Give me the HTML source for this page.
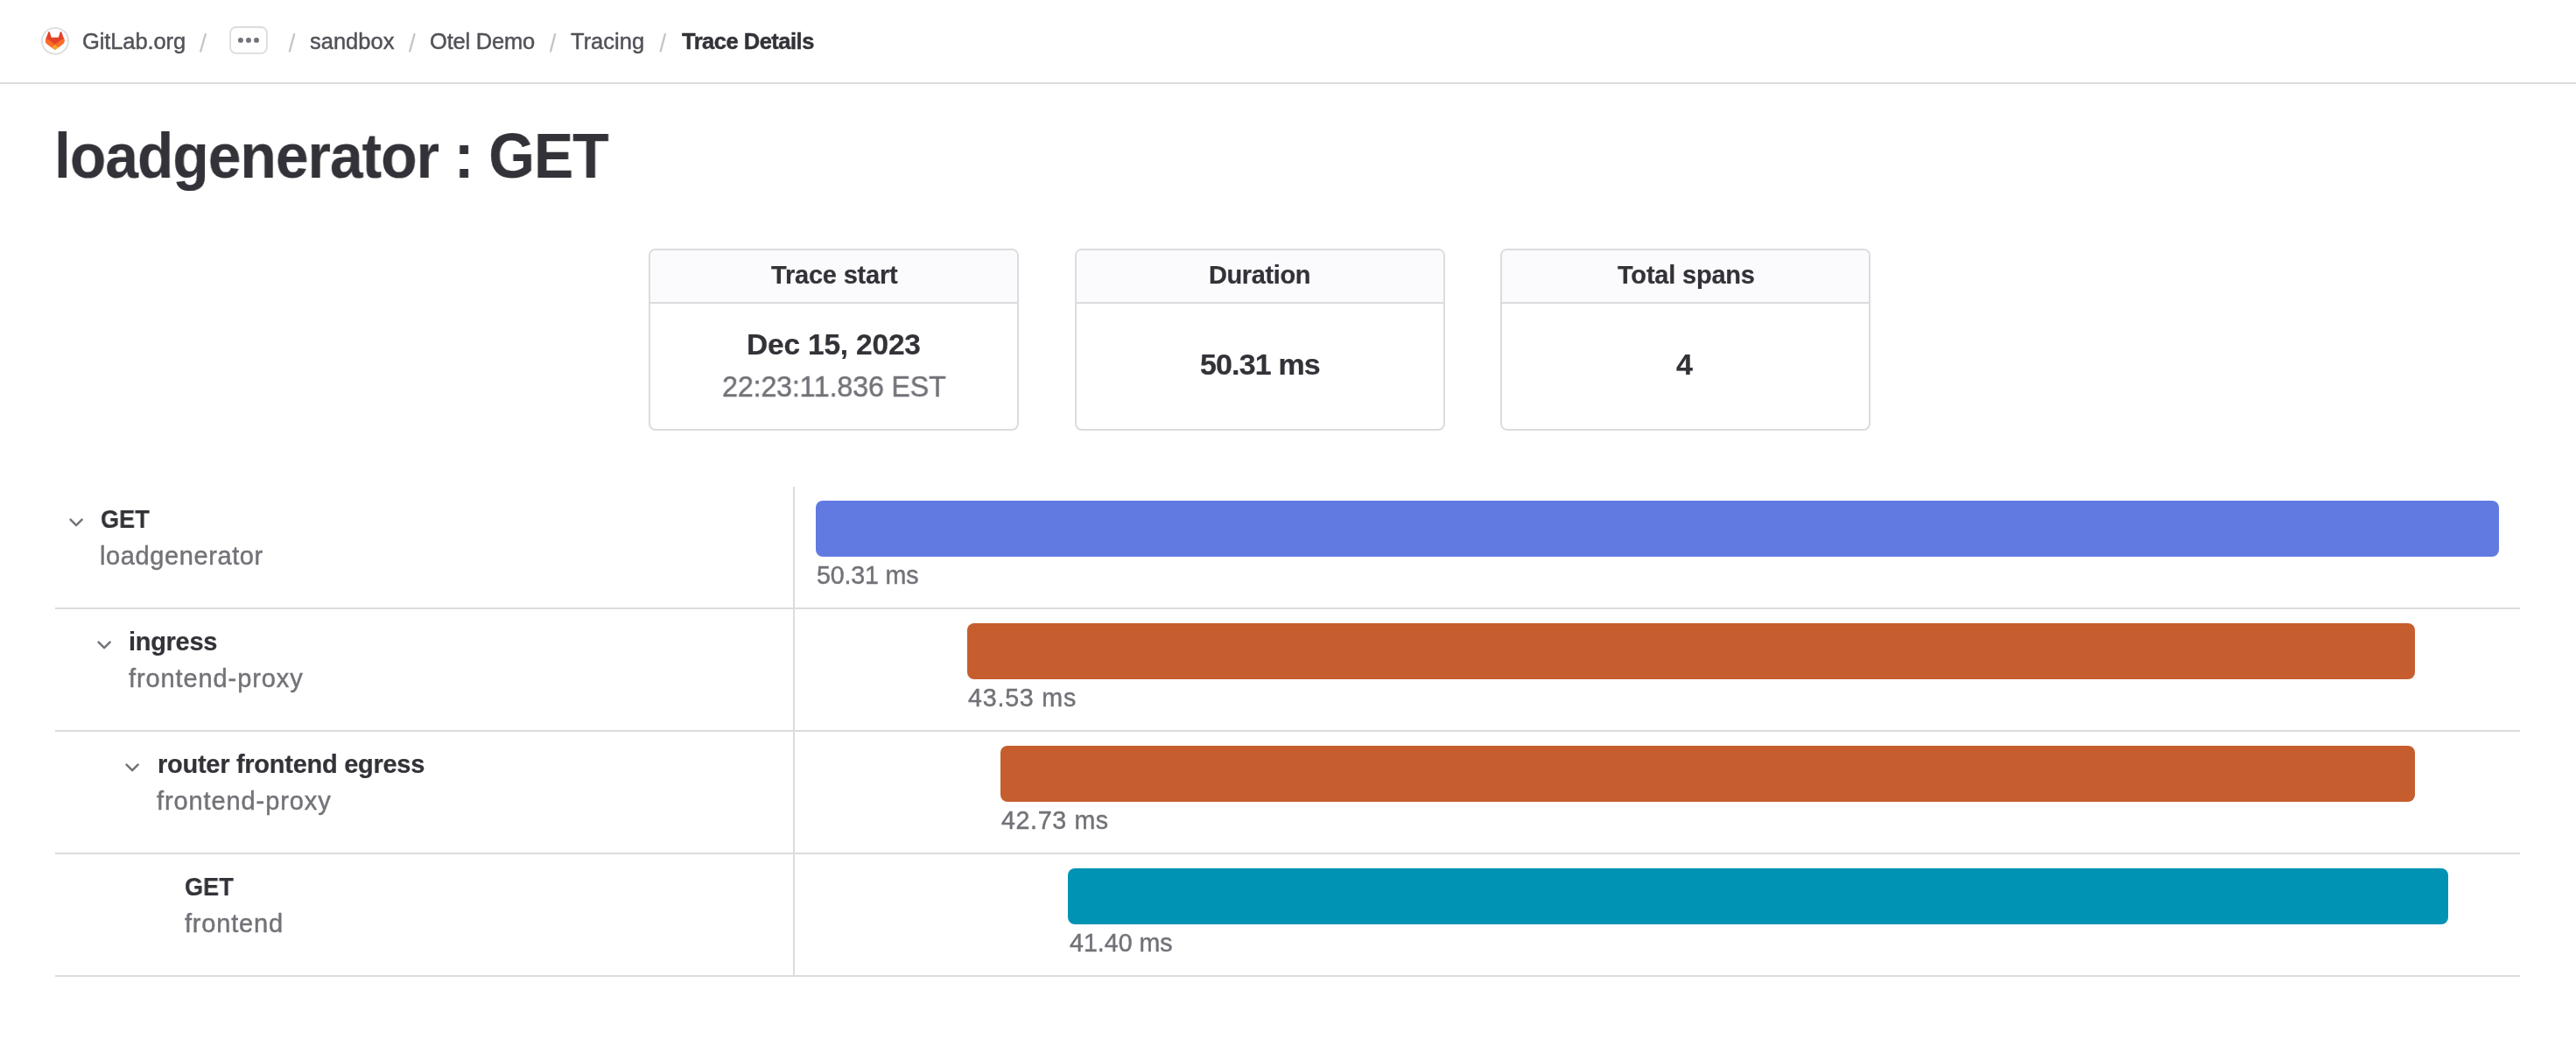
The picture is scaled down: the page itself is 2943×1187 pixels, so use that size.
<!DOCTYPE html>
<html>
<head>
<meta charset="utf-8">
<style>
html,body{margin:0;padding:0;background:#fff;}
body{width:2943px;height:1187px;position:relative;overflow:hidden;font-family:"Liberation Sans",sans-serif;}
.t{position:absolute;white-space:nowrap;line-height:1;will-change:transform;}
.b{font-weight:bold;}
.hdr{position:absolute;left:0;top:94px;width:2943px;height:2px;background:#dcdcde;}
.bc{font-size:25.5px;color:#535158;}
.title{font-size:72px;color:#333238;font-weight:bold;}
.card{position:absolute;top:284px;width:419px;height:204px;border:2px solid #dcdcde;border-radius:8px;overflow:hidden;}
.card .hd{position:absolute;left:0;top:0;width:100%;height:59px;background:#fbfafd;border-bottom:2px solid #dcdcde;}
.ch{font-size:29px;color:#333238;font-weight:bold;}
.cv{font-size:32.5px;color:#333238;font-weight:bold;}
.cg{font-size:33.5px;color:#737278;}
.rowline{position:absolute;left:63px;width:2816px;height:2px;background:#dcdcde;}
.vdiv{position:absolute;left:906px;top:556px;width:2px;height:559px;background:#dcdcde;}
.bar{position:absolute;height:64px;border-radius:8px;}
.sn{font-size:29px;color:#333238;font-weight:bold;}
.ss{font-size:29px;color:#737278;}
.dl{font-size:28.6px;color:#737278;}
.chev{position:absolute;width:17px;height:11px;}
.bc,.ss,.dl,.cg{-webkit-text-stroke:0.45px currentColor;}
.ch,.cv,.sn,.title{-webkit-text-stroke:0.2px currentColor;}
</style>
</head>
<body>
<!-- header / breadcrumbs -->
<svg style="position:absolute;left:0;top:0" width="320" height="90"><circle cx="63" cy="46.8" r="15" fill="none" stroke="#dcdcde" stroke-width="1.8"/><rect x="263.1" y="31" width="41.8" height="29.8" rx="6.5" fill="none" stroke="#dcdcde" stroke-width="1.8"/><circle cx="274.9" cy="45.9" r="2.95" fill="#737278"/><circle cx="283.95" cy="45.9" r="2.95" fill="#737278"/><circle cx="293" cy="45.9" r="2.95" fill="#737278"/></svg>
<svg style="position:absolute;left:52.3px;top:36.2px" width="21.6" height="20.8" viewBox="0 0 25 24"><path d="m24.507 9.5-.034-.09L21.082.562a.896.896 0 0 0-1.694.091l-2.29 7.01H7.825L5.535.653a.898.898 0 0 0-1.694-.09L.451 9.411.416 9.5a6.297 6.297 0 0 0 2.09 7.278l.012.01.03.022 5.16 3.867 2.56 1.935 1.554 1.176a1.051 1.051 0 0 0 1.268 0l1.555-1.176 2.56-1.935 5.197-3.89.014-.01A6.297 6.297 0 0 0 24.507 9.5Z" fill="#E24329"/><path d="m24.507 9.5-.034-.09a11.44 11.44 0 0 0-4.56 2.051l-7.447 5.632 4.742 3.584 5.197-3.89.014-.01A6.297 6.297 0 0 0 24.507 9.5Z" fill="#FC6D26"/><path d="m7.707 20.677 2.56 1.935 1.555 1.176a1.051 1.051 0 0 0 1.268 0l1.555-1.176 2.56-1.935-4.743-3.584-4.755 3.584Z" fill="#FCA326"/><path d="M5.01 11.461a11.43 11.43 0 0 0-4.56-2.05L.416 9.5a6.297 6.297 0 0 0 2.09 7.278l.012.01.03.022 5.16 3.867 4.745-3.584-7.444-5.632Z" fill="#FC6D26"/></svg>
<div class="t bc" style="left:94px;top:35px;letter-spacing:-0.1px">GitLab.org</div>
<div class="t bc" style="left:354px;top:35px">sandbox</div>
<div class="t bc" style="left:491px;top:35px;letter-spacing:-0.2px">Otel Demo</div>
<div class="t bc" style="left:652px;top:35px">Tracing</div>
<div class="t bc b" style="left:778.5px;top:35px;color:#333238;letter-spacing:-0.5px">Trace Details</div>
<svg style="position:absolute;left:0;top:0" width="800" height="70"><line x1="234.8" y1="39.2" x2="229.2" y2="58.5" stroke="#c4c4c8" stroke-width="2.3" stroke-linecap="round"/><line x1="336.1" y1="39.2" x2="330.9" y2="58.5" stroke="#c4c4c8" stroke-width="2.3" stroke-linecap="round"/><line x1="473.5" y1="39.2" x2="468.2" y2="58.5" stroke="#c4c4c8" stroke-width="2.3" stroke-linecap="round"/><line x1="634.1" y1="39.2" x2="629.1" y2="58.5" stroke="#c4c4c8" stroke-width="2.3" stroke-linecap="round"/><line x1="759.8" y1="39.2" x2="754.7" y2="58.5" stroke="#c4c4c8" stroke-width="2.3" stroke-linecap="round"/></svg>
<div class="hdr"></div>

<!-- title -->
<div class="t title" style="left:62px;top:142px;letter-spacing:-1px;transform:scaleX(0.94);transform-origin:0 0">loadgenerator : GET</div>

<!-- cards -->
<div class="card" style="left:741px"><div class="hd"></div></div>
<div class="card" style="left:1228px"><div class="hd"></div></div>
<div class="card" style="left:1714px"><div class="hd"></div></div>
<div class="t ch" style="left:880.5px;top:300px;letter-spacing:-0.2px">Trace start</div>
<div class="t cv" style="left:852.5px;top:376.5px;font-size:33.5px;letter-spacing:-0.2px">Dec 15, 2023</div>
<div class="t cg" style="left:825px;top:424px;font-size:34px;letter-spacing:-0.2px;transform:scaleX(0.95);transform-origin:0 0">22:23:<span style="letter-spacing:-2px">1</span>1.836 EST</div>
<div class="t ch" style="left:1381px;top:300px;letter-spacing:-0.4px">Duration</div>
<div class="t cv" style="left:1371px;top:399px;font-size:34px;letter-spacing:-0.85px">50.31 ms</div>
<div class="t ch" style="left:1847.5px;top:300px;letter-spacing:-0.2px">Total spans</div>
<div class="t cv" style="left:1915px;top:399px;font-size:34px">4</div>

<!-- table -->
<div class="vdiv"></div>
<div class="rowline" style="top:694px"></div>
<div class="rowline" style="top:834px"></div>
<div class="rowline" style="top:974px"></div>
<div class="rowline" style="top:1114px"></div>

<svg class="chev" style="left:78.8px;top:591.5px" viewBox="0 0 17 11"><path d="M1.6 1.7 L8.1 8.2 L14.6 1.7" fill="none" stroke="#737278" stroke-width="2.5" stroke-linecap="round" stroke-linejoin="round"/></svg>
<div class="t sn" style="left:114.5px;top:579px;transform:scaleX(0.935);transform-origin:0 0">GET</div>
<div class="t ss" style="left:114px;top:621px;letter-spacing:0.6px">loadgenerator</div>
<div class="bar" style="left:932px;top:572px;width:1923px;background:#617ae2"></div>
<div class="t dl" style="left:933px;top:643px;letter-spacing:-0.15px">50.31 ms</div>

<svg class="chev" style="left:110.8px;top:731.7px" viewBox="0 0 17 11"><path d="M1.6 1.7 L8.1 8.2 L14.6 1.7" fill="none" stroke="#737278" stroke-width="2.5" stroke-linecap="round" stroke-linejoin="round"/></svg>
<div class="t sn" style="left:146.5px;top:719px;letter-spacing:-0.3px">ingress</div>
<div class="t ss" style="left:147px;top:761px;letter-spacing:0.9px">frontend-proxy</div>
<div class="bar" style="left:1105px;top:712px;width:1654px;background:#c65d2e"></div>
<div class="t dl" style="left:1106px;top:783px;letter-spacing:0.8px">43.53 ms</div>

<svg class="chev" style="left:142.8px;top:871.7px" viewBox="0 0 17 11"><path d="M1.6 1.7 L8.1 8.2 L14.6 1.7" fill="none" stroke="#737278" stroke-width="2.5" stroke-linecap="round" stroke-linejoin="round"/></svg>
<div class="t sn" style="left:179.5px;top:859px;letter-spacing:-0.27px">router frontend egress</div>
<div class="t ss" style="left:179px;top:901px;letter-spacing:0.9px">frontend-proxy</div>
<div class="bar" style="left:1143px;top:852px;width:1616px;background:#c65d2e"></div>
<div class="t dl" style="left:1144px;top:923px;letter-spacing:0.65px">42.73 ms</div>

<div class="t sn" style="left:210.5px;top:999px;transform:scaleX(0.935);transform-origin:0 0">GET</div>
<div class="t ss" style="left:211px;top:1041px;letter-spacing:0.8px">frontend</div>
<div class="bar" style="left:1220px;top:992px;width:1577px;background:#0093b3"></div>
<div class="t dl" style="left:1222px;top:1063px">41.40 ms</div>
</body>
</html>
